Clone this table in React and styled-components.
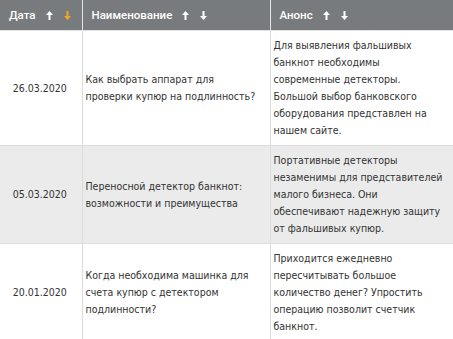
import React from 'react';
import styled, { createGlobalStyle } from 'styled-components';

const GlobalStyle = createGlobalStyle`
    html, body {
        margin: 0;
        padding: 0;
        background: #fff;
    }
    body {
        font-family: "DejaVu Sans Condensed", "DejaVu Sans", sans-serif;
        font-size: 10.5px;
        color: #333;
    }
`;

const Table = styled.table`
    width: 453px;
    border-collapse: collapse;
    table-layout: fixed;
`;

const Col = styled.col`
    width: ${props => props.w}px;
`;

const Th = styled.th`
    height: 30px;
    padding: 0 9px;
    background: #777b7d;
    color: #fff;
    font-family: Roboto, "Liberation Sans", sans-serif;
    font-weight: 500;
    font-size: 11.5px;
    text-align: left;
    border-right: 1px solid #e4e4e4;
    border-bottom: 1px solid #e4e4e4;
    white-space: nowrap;
`;

const Row = styled.tr`
    background: ${props => (props.shaded ? '#ebebeb' : '#fff')};
`;

const Td = styled.td`
    padding: 6px 5px 6px 3px;
    line-height: 17px;
    border-right: 1px solid #dcdcdc;
    border-bottom: 1px solid #dcdcdc;
    white-space: nowrap;
    overflow: hidden;
    vertical-align: ${props => (props.top ? 'top' : 'middle')};
    text-align: ${props => (props.center ? 'center' : 'left')};
`;

const Line = styled.span`
    display: block;
`;

const Arrows = styled.span`
    display: inline-flex;
    gap: 11px;
    margin-left: 10px;
    vertical-align: -1px;
`;

const Arrow = ({ down, active }) => (
    <svg width="7" height="9" viewBox="0 0 7 9">
        <g fill={active ? '#f5a623' : '#fff'} transform={down ? 'rotate(180 3.5 4.5)' : undefined}>
            <polygon points="3.5,0 7,4 0,4" />
            <rect x="2.5" y="3" width="2" height="6" />
        </g>
    </svg>
);

const SortHead = ({ title, active }) => (
    <Th>
        {title}
        <Arrows>
            <Arrow />
            <Arrow down active={active} />
        </Arrows>
    </Th>
);

const Lines = ({ items }) => items.map(t => <Line key={t}>{t}</Line>);

const rows = [
    {
        date: '26.03.2020',
        title: ['Как выбрать аппарат для', 'проверки купюр на подлинность?'],
        text: [
            'Для выявления фальшивых',
            'банкнот необходимы',
            'современные детекторы.',
            'Большой выбор банковского',
            'оборудования представлен на',
            'нашем сайте.'
        ]
    },
    {
        date: '05.03.2020',
        title: ['Переносной детектор банкнот:', 'возможности и преимущества'],
        text: [
            'Портативные детекторы',
            'незаменимы для представителей',
            'малого бизнеса. Они',
            'обеспечивают надежную защиту',
            'от фальшивых купюр.'
        ]
    },
    {
        date: '20.01.2020',
        title: ['Когда необходима машинка для', 'счета купюр с детектором', 'подлинности?'],
        text: [
            'Приходится ежедневно',
            'пересчитывать большое',
            'количество денег? Упростить',
            'операцию позволит счетчик',
            'банкнот.'
        ]
    }
];

export default function App() {
    return (
        <>
            <GlobalStyle />
            <Table>
                <colgroup>
                    <Col w={82} />
                    <Col w={188} />
                    <Col w={183} />
                </colgroup>
                <thead>
                    <tr>
                        <SortHead title="Дата" active />
                        <SortHead title="Наименование" />
                        <SortHead title="Анонс" />
                    </tr>
                </thead>
                <tbody>
                    {rows.map((r, i) => (
                        <Row key={r.date} shaded={i === 1}>
                            <Td center>{r.date}</Td>
                            <Td>
                                <Lines items={r.title} />
                            </Td>
                            <Td top>
                                <Lines items={r.text} />
                            </Td>
                        </Row>
                    ))}
                </tbody>
            </Table>
        </>
    );
}
